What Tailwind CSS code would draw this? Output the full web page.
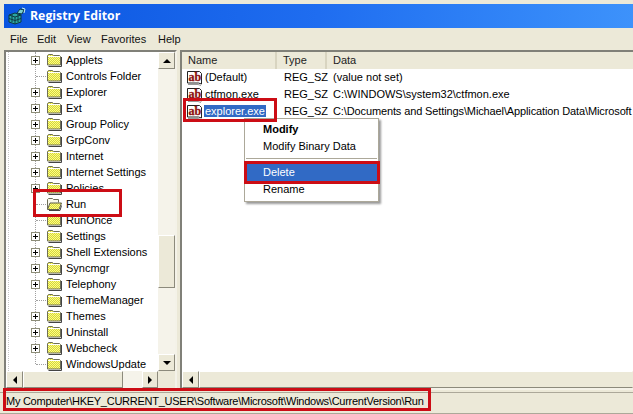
<!DOCTYPE html>
<html>
<head>
<meta charset="UTF-8">
<script src="https://cdn.jsdelivr.net/npm/@tailwindcss/browser@4"></script>
</head>
<body class="bg-[#ece9d8] overflow-hidden font-['Liberation_Sans',sans-serif] text-[11px] text-black">
<svg width="0" height="0" class="absolute">
  <defs>
    <pattern id="dither" width="2" height="2" patternUnits="userSpaceOnUse">
      <rect width="2" height="2" fill="#ffff80"/><rect width="1" height="1" fill="#d4d440"/><rect x="1" y="1" width="1" height="1" fill="#d4d440"/>
    </pattern>
    <symbol id="folder" viewBox="0 0 16 14">
      <path d="M1.500 2.500l1-1h4l1 1h6l1 1v8.500h-13z" fill="url(#dither)" stroke="#6e6e58"/>
      <path d="M2 3.500h12" stroke="#fff"/>
      <path d="M15.500 4v9.500h-13" fill="none" stroke="#444"/>
    </symbol>
    <symbol id="openfolder" viewBox="0 0 16 14">
      <path d="M1.500 12V2.500l1-1h4l1 1h5v3" fill="#f8f8ec" stroke="#6e6e58"/>
      <path d="M1.500 12.500l2.500-6.500h11.500l-2.500 6.500z" fill="url(#dither)" stroke="#5c5c4c"/>
      <path d="M3 13.500h11l1.500-5" fill="none" stroke="#444"/>
    </symbol>
    <symbol id="plus" viewBox="0 0 9 9">
      <rect x="0.500" y="0.500" width="8" height="8" fill="#fff" stroke="#8d8d78"/>
      <path d="M2 4.500h5M4.500 2v5" stroke="#000"/>
    </symbol>
    <symbol id="ab" viewBox="0 0 16 16">
      <path d="M0.500 1.500h12l2 2v10.500l-3-1h-11z" fill="#fff" stroke="#222"/>
      <path d="M1 14.500h10l3 1" fill="none" stroke="#999"/>
      <text x="1.500" y="10.500" font-family="Liberation Serif" font-weight="700" font-size="12" fill="#8c1010" stroke="#8c1010" stroke-width="0.300">ab</text>
    </symbol>
  </defs>
</svg>

<div class="relative h-[414px] w-[633px] overflow-hidden">
  <!-- title bar -->
  <div class="mt-[4px] ml-[4px] flex h-[24px] items-center gap-[4px] bg-gradient-to-r from-[#0a55e0] via-[#1f6df0] to-[#3d92fb] pl-[4px]">
    <svg width="18" height="18" viewBox="0 0 18 18">
      <path d="M1 8l6-2 6 2v7l-6 2-6-2z" fill="#2aa5a0" stroke="#0c3b44"/>
      <path d="M7 10v7M1 8l6 2 6-2M4 7v8M10 7v8M1 11.500l6 2 6-2" fill="none" stroke="#0c3b44"/>
      <path d="M9 6l3-4 4 1-2 4z" fill="#7ad0d0" stroke="#0c3b44"/>
      <path d="M14 1l3 1-1 4" fill="none" stroke="#c8f0e8"/>
    </svg>
    <span class="font-['Open_Sans',sans-serif] text-[12.300px] font-bold text-white">Registry Editor</span>
  </div>

  <!-- menu bar -->
  <div class="flex h-[22px] items-center pl-[10px] text-[#111]">
    <span class="w-[27px]">File</span><span class="w-[30px]">Edit</span><span class="w-[34px]">View</span><span class="w-[57px]">Favorites</span><span>Help</span>
  </div>

  <div class="flex h-[340px]">
    <!-- tree pane -->
    <div class="ml-[4px] flex h-full w-[173px] shrink-0 flex-col border-2 border-t-[#808078] border-l-[#808078] border-r-[#f4f2e8] border-b-[#f4f2e8] bg-white">
      <div class="flex min-h-0 flex-1">
        <div class="relative flex-1 overflow-hidden">
          <div class="absolute top-0 left-[29px] h-[312px] border-l border-dotted border-[#a0a0a0]"></div>
          <div class="absolute top-0 bottom-0 left-[2px] border-l border-dotted border-[#c8c8c8]"></div>
          <ul class="relative">
            <li class="flex h-[16px] items-center pl-[25px]"><svg class="size-[9px]"><use href="#plus"/></svg><svg class="ml-[6px] size-[16px]"><use href="#folder"/></svg><span class="ml-[4px]">Applets</span></li>
            <li class="flex h-[16px] items-center pl-[25px]"><span class="ml-[5px] w-[10px] border-t border-dotted border-[#a0a0a0]"></span><svg class="size-[16px]"><use href="#folder"/></svg><span class="ml-[4px]">Controls Folder</span></li>
            <li class="flex h-[16px] items-center pl-[25px]"><svg class="size-[9px]"><use href="#plus"/></svg><svg class="ml-[6px] size-[16px]"><use href="#folder"/></svg><span class="ml-[4px]">Explorer</span></li>
            <li class="flex h-[16px] items-center pl-[25px]"><svg class="size-[9px]"><use href="#plus"/></svg><svg class="ml-[6px] size-[16px]"><use href="#folder"/></svg><span class="ml-[4px]">Ext</span></li>
            <li class="flex h-[16px] items-center pl-[25px]"><svg class="size-[9px]"><use href="#plus"/></svg><svg class="ml-[6px] size-[16px]"><use href="#folder"/></svg><span class="ml-[4px]">Group Policy</span></li>
            <li class="flex h-[16px] items-center pl-[25px]"><svg class="size-[9px]"><use href="#plus"/></svg><svg class="ml-[6px] size-[16px]"><use href="#folder"/></svg><span class="ml-[4px]">GrpConv</span></li>
            <li class="flex h-[16px] items-center pl-[25px]"><svg class="size-[9px]"><use href="#plus"/></svg><svg class="ml-[6px] size-[16px]"><use href="#folder"/></svg><span class="ml-[4px]">Internet</span></li>
            <li class="flex h-[16px] items-center pl-[25px]"><svg class="size-[9px]"><use href="#plus"/></svg><svg class="ml-[6px] size-[16px]"><use href="#folder"/></svg><span class="ml-[4px]">Internet Settings</span></li>
            <li class="flex h-[16px] items-center pl-[25px]"><svg class="size-[9px]"><use href="#plus"/></svg><svg class="ml-[6px] size-[16px]"><use href="#folder"/></svg><span class="ml-[4px]">Policies</span></li>
            <li class="flex h-[16px] items-center pl-[25px]"><span class="ml-[5px] w-[10px] border-t border-dotted border-[#a0a0a0]"></span><svg class="size-[16px]"><use href="#openfolder"/></svg><span class="ml-[4px]">Run</span></li>
            <li class="flex h-[16px] items-center pl-[25px]"><span class="ml-[5px] w-[10px] border-t border-dotted border-[#a0a0a0]"></span><svg class="size-[16px]"><use href="#folder"/></svg><span class="ml-[4px]">RunOnce</span></li>
            <li class="flex h-[16px] items-center pl-[25px]"><svg class="size-[9px]"><use href="#plus"/></svg><svg class="ml-[6px] size-[16px]"><use href="#folder"/></svg><span class="ml-[4px]">Settings</span></li>
            <li class="flex h-[16px] items-center pl-[25px]"><svg class="size-[9px]"><use href="#plus"/></svg><svg class="ml-[6px] size-[16px]"><use href="#folder"/></svg><span class="ml-[4px]">Shell Extensions</span></li>
            <li class="flex h-[16px] items-center pl-[25px]"><svg class="size-[9px]"><use href="#plus"/></svg><svg class="ml-[6px] size-[16px]"><use href="#folder"/></svg><span class="ml-[4px]">Syncmgr</span></li>
            <li class="flex h-[16px] items-center pl-[25px]"><svg class="size-[9px]"><use href="#plus"/></svg><svg class="ml-[6px] size-[16px]"><use href="#folder"/></svg><span class="ml-[4px]">Telephony</span></li>
            <li class="flex h-[16px] items-center pl-[25px]"><span class="ml-[5px] w-[10px] border-t border-dotted border-[#a0a0a0]"></span><svg class="size-[16px]"><use href="#folder"/></svg><span class="ml-[4px]">ThemeManager</span></li>
            <li class="flex h-[16px] items-center pl-[25px]"><svg class="size-[9px]"><use href="#plus"/></svg><svg class="ml-[6px] size-[16px]"><use href="#folder"/></svg><span class="ml-[4px]">Themes</span></li>
            <li class="flex h-[16px] items-center pl-[25px]"><svg class="size-[9px]"><use href="#plus"/></svg><svg class="ml-[6px] size-[16px]"><use href="#folder"/></svg><span class="ml-[4px]">Uninstall</span></li>
            <li class="flex h-[16px] items-center pl-[25px]"><svg class="size-[9px]"><use href="#plus"/></svg><svg class="ml-[6px] size-[16px]"><use href="#folder"/></svg><span class="ml-[4px]">Webcheck</span></li>
            <li class="flex h-[16px] items-center pl-[25px]"><span class="ml-[5px] w-[10px] border-t border-dotted border-[#a0a0a0]"></span><svg class="size-[16px]"><use href="#folder"/></svg><span class="ml-[4px]">WindowsUpdate</span></li>
          </ul>
        </div>
        <!-- vertical scrollbar -->
        <div class="flex w-[17px] shrink-0 flex-col bg-[#f5f3ea]">
          <div class="flex h-[17px] items-center justify-center border border-t-white border-l-white border-r-[#8c8a7c] border-b-[#8c8a7c] bg-[#ece9d8]"><span class="border-x-[4px] border-b-[4px] border-x-transparent border-b-black"></span></div>
          <div class="mt-[166px] h-[53px] border border-t-white border-l-white border-r-[#8c8a7c] border-b-[#8c8a7c] bg-[#ece9d8]"></div>
          <div class="mt-auto flex h-[17px] items-center justify-center border border-t-white border-l-white border-r-[#8c8a7c] border-b-[#8c8a7c] bg-[#ece9d8]"><span class="border-x-[4px] border-t-[4px] border-x-transparent border-t-black"></span></div>
        </div>
      </div>
      <!-- horizontal scrollbar -->
      <div class="flex h-[17px] shrink-0 bg-[#f5f3ea]">
        <div class="flex w-[17px] items-center justify-center border border-t-white border-l-white border-r-[#8c8a7c] border-b-[#8c8a7c] bg-[#ece9d8]"><span class="border-y-[4px] border-r-[4px] border-y-transparent border-r-black"></span></div>
        <div class="w-[100px] border border-t-white border-l-white border-r-[#8c8a7c] border-b-[#8c8a7c] bg-[#ece9d8]"></div>
        <div class="ml-auto flex w-[16px] items-center justify-center border border-t-white border-l-white border-r-[#8c8a7c] border-b-[#8c8a7c] bg-[#ece9d8]"><span class="border-y-[4px] border-l-[4px] border-y-transparent border-l-black"></span></div>
        <div class="w-[17px] bg-[#ece9d8]"></div>
      </div>
    </div>

    <!-- list pane -->
    <div class="ml-[3px] flex h-full min-w-0 flex-1 flex-col border-t-2 border-l-2 border-b-2 border-t-[#808078] border-l-[#808078] border-b-[#f4f2e8] bg-white">
      <div class="flex h-[17px] shrink-0 items-center bg-[#ece9d8] text-[#222]">
        <span class="w-[95px] border-r-2 border-[#d8d4c0] pl-[6px]">Name</span>
        <span class="w-[50px] border-r-2 border-[#d8d4c0] pl-[6px]">Type</span>
        <span class="pl-[6px]">Data</span>
      </div>
      <div class="relative min-h-0 flex-1">
        <ul>
          <li class="flex h-[17px] items-center pl-[5px]"><svg class="size-[16px] shrink-0"><use href="#ab"/></svg><span class="ml-[1px] w-[74px] shrink-0 pl-[1px]">(Default)</span><span class="w-[50px] shrink-0 pl-[6px]">REG_SZ</span><span class="whitespace-nowrap pl-[5px]">(value not set)</span></li>
          <li class="flex h-[17px] items-center pl-[5px]"><svg class="size-[16px] shrink-0"><use href="#ab"/></svg><span class="ml-[1px] w-[74px] shrink-0 pl-[1px]">ctfmon.exe</span><span class="w-[50px] shrink-0 pl-[6px]">REG_SZ</span><span class="whitespace-nowrap pl-[5px]">C:\WINDOWS\system32\ctfmon.exe</span></li>
          <li class="flex h-[17px] items-center pl-[5px]"><svg class="size-[16px] shrink-0"><use href="#ab"/></svg><span class="ml-[1px] w-[74px] shrink-0"><span class="bg-[#316ac5] px-[1px] text-white">explorer.exe</span></span><span class="w-[50px] shrink-0 pl-[6px]">REG_SZ</span><span class="whitespace-nowrap pl-[5px] tracking-[-0.12px]">C:\Documents and Settings\Michael\Application Data\Microsoft</span></li>
        </ul>
        <!-- context menu -->
        <div class="absolute top-[49px] left-[62px] w-[135px] border border-[#aca899] bg-white pt-[2px] pb-[3px] shadow-[2px_2px_2px_rgba(0,0,0,0.4)]">
          <div class="flex h-[17px] items-center pl-[18px] font-bold">Modify</div>
          <div class="flex h-[17px] items-center pl-[18px]">Modify Binary Data</div>
          <div class="mx-[1px] mt-[3px] mb-[5px] border-t border-[#aca899]"></div>
          <div class="flex h-[17px] items-center bg-[#316ac5] pl-[18px] text-white">Delete</div>
          <div class="flex h-[17px] items-center pl-[18px]">Rename</div>
        </div>
      </div>
      <div class="flex h-[17px] shrink-0 bg-[#f5f3ea]">
        <div class="flex w-[17px] items-center justify-center border border-t-white border-l-white border-r-[#8c8a7c] border-b-[#8c8a7c] bg-[#ece9d8]"><span class="border-y-[4px] border-r-[4px] border-y-transparent border-r-black"></span></div>
        <div class="flex-1 border border-t-white border-l-white border-b-[#8c8a7c] border-r-transparent bg-[#ece9d8]"></div>
      </div>
    </div>
  </div>

  <!-- status bar -->
  <div class="mt-[2px] flex h-[22px] items-center whitespace-nowrap border-y border-t-[#aca899] border-b-[#aca899] pb-[3px] pl-[6px] tracking-[-0.26px]">My Computer\HKEY_CURRENT_USER\Software\Microsoft\Windows\CurrentVersion\Run</div>

  <!-- red annotation boxes -->
  <div class="absolute top-[189px] left-[33px] h-[28px] w-[89px] border-[3px] border-[#cc0d15]"></div>
  <div class="absolute top-[98px] left-[183px] h-[24px] w-[94px] border-[3px] border-[#cc0d15]"></div>
  <div class="absolute top-[161px] left-[244px] h-[23px] w-[136px] border-[3px] border-[#cc0d15]"></div>
  <div class="absolute top-[388px] left-[3px] h-[23px] w-[428px] border-[3px] border-[#cc0d15]"></div>
</div>
</body>
</html>
